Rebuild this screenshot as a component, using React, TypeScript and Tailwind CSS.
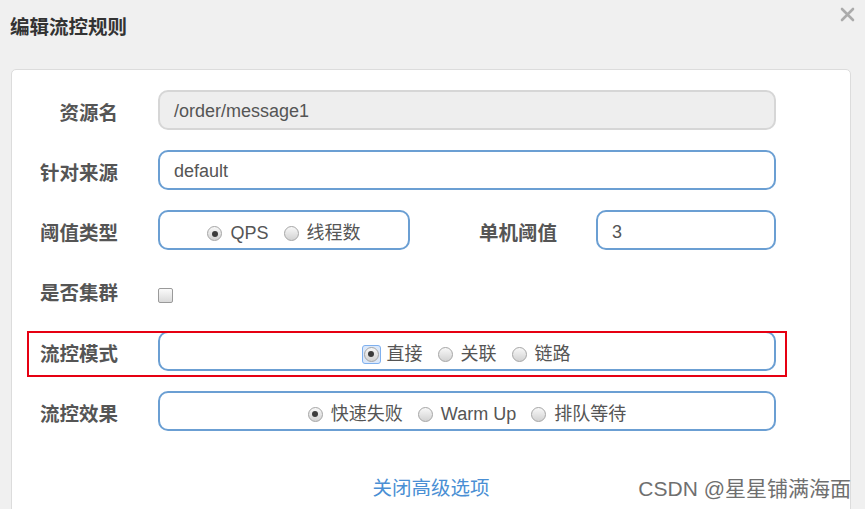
import React from "react";

const font = "font-['Liberation_Sans','Noto_Sans_CJK_SC',sans-serif]";

function Radio({ checked, focused }: { checked?: boolean; focused?: boolean }) {
  const dot = (
    <span className="flex h-[15px] w-[15px] items-center justify-center rounded-full border border-[#a5a5a5] bg-gradient-to-b from-[#f8f8f8] to-[#d2d2d2]">
      {checked && <span className="h-[6px] w-[6px] rounded-full bg-[#3c3c3c]" />}
    </span>
  );
  if (focused) {
    return (
      <span className="-m-[2px] flex rounded-[3px] border border-[#7fb0ee] bg-[#dbe8fa] p-[1px]">
        {dot}
      </span>
    );
  }
  return dot;
}

function RadioGroup({
  options,
  checked,
  focusFirst,
}: {
  options: string[];
  checked: number;
  focusFirst?: boolean;
}) {
  return (
    <div className="flex h-full w-full items-center justify-center gap-[15px] rounded-[10px] border-2 border-[#6b9fd3] bg-white pt-[7px] text-[18px] text-[#555]">
      {options.map((o, i) => (
        <label key={o} className="flex items-center gap-[8px]">
          <Radio checked={i === checked} focused={focusFirst && i === 0} />
          <span>{o}</span>
        </label>
      ))}
    </div>
  );
}

function Label({ children, w = "w-[106px]" }: { children: React.ReactNode; w?: string }) {
  return (
    <div className={`${w} shrink-0 pt-[7px] text-right text-[19.5px] font-bold text-[#555]`}>
      {children}
    </div>
  );
}

export default function App() {
  return (
    <div className={`relative h-[509px] w-[865px] overflow-hidden bg-[#f0f0f0] ${font}`}>
      <div className="flex h-[56px] justify-between">
        <h1 className="self-center pl-[10px] text-[19.5px] font-bold text-[#333]">编辑流控规则</h1>
        <svg className="mr-[10px] mt-[7px]" width="15" height="15" viewBox="0 0 15 15">
          <path d="M2 2 L13 13 M13 2 L2 13" stroke="#ababab" strokeWidth="2.6" strokeLinecap="round" />
        </svg>
      </div>

      <div className="ml-[11px] mt-[13px] h-[470px] w-[840px] rounded-[5px] border border-[#dcdcdc] bg-white pt-[20px]">
        <div className="flex flex-col gap-[20.2px]">
          <div className="flex h-[40px] items-center">
            <Label>资源名</Label>
            <div className="ml-[40px] flex h-full w-[618px] items-center rounded-[10px] border-2 border-[#d6d6d6] bg-[#eeeeee] px-[14px] pt-[2px] text-[18px] text-[#555]">
              /order/message1
            </div>
          </div>

          <div className="flex h-[40px] items-center">
            <Label>针对来源</Label>
            <div className="ml-[40px] flex h-full w-[618px] items-center rounded-[10px] border-2 border-[#6b9fd3] bg-white px-[14px] pt-[3px] text-[18px] text-[#555]">
              default
            </div>
          </div>

          <div className="flex h-[40px] items-center">
            <Label>阈值类型</Label>
            <div className="ml-[40px] h-full w-[252px]">
              <RadioGroup options={["QPS", "线程数"]} checked={0} />
            </div>
            <Label w="w-[147px]">单机阈值</Label>
            <div className="ml-[39px] flex h-full w-[180px] items-center rounded-[10px] border-2 border-[#6b9fd3] bg-white px-[14px] pt-[4px] text-[18px] text-[#555]">
              3
            </div>
          </div>

          <div className="flex h-[40px] items-center">
            <Label>是否集群</Label>
            <span className="ml-[40px] mt-[9px] h-[15px] w-[15px] rounded-[2px] border border-[#9a9a9a] bg-gradient-to-b from-[#fafafa] to-[#dadada]" />
          </div>

          <div className="relative flex h-[40px] items-center">
            <Label>流控模式</Label>
            <div className="ml-[40px] h-full w-[618px]">
              <RadioGroup options={["直接", "关联", "链路"]} checked={0} focusFirst />
            </div>
            <div className="pointer-events-none absolute left-[15px] top-0 h-[46px] w-[760px] border-2 border-[#e60012]" />
          </div>

          <div className="flex h-[40px] items-center">
            <Label>流控效果</Label>
            <div className="ml-[40px] h-full w-[618px]">
              <RadioGroup options={["快速失败", "Warm Up", "排队等待"]} checked={0} />
            </div>
          </div>
        </div>

        <div className="mt-[46px] text-center text-[19.5px] leading-[22px] text-[#4a8fd4]">关闭高级选项</div>
      </div>

      <div className="absolute bottom-[5px] right-[14px] text-[21px] text-[#6f6f6f]">CSDN @星星铺满海面</div>
    </div>
  );
}
